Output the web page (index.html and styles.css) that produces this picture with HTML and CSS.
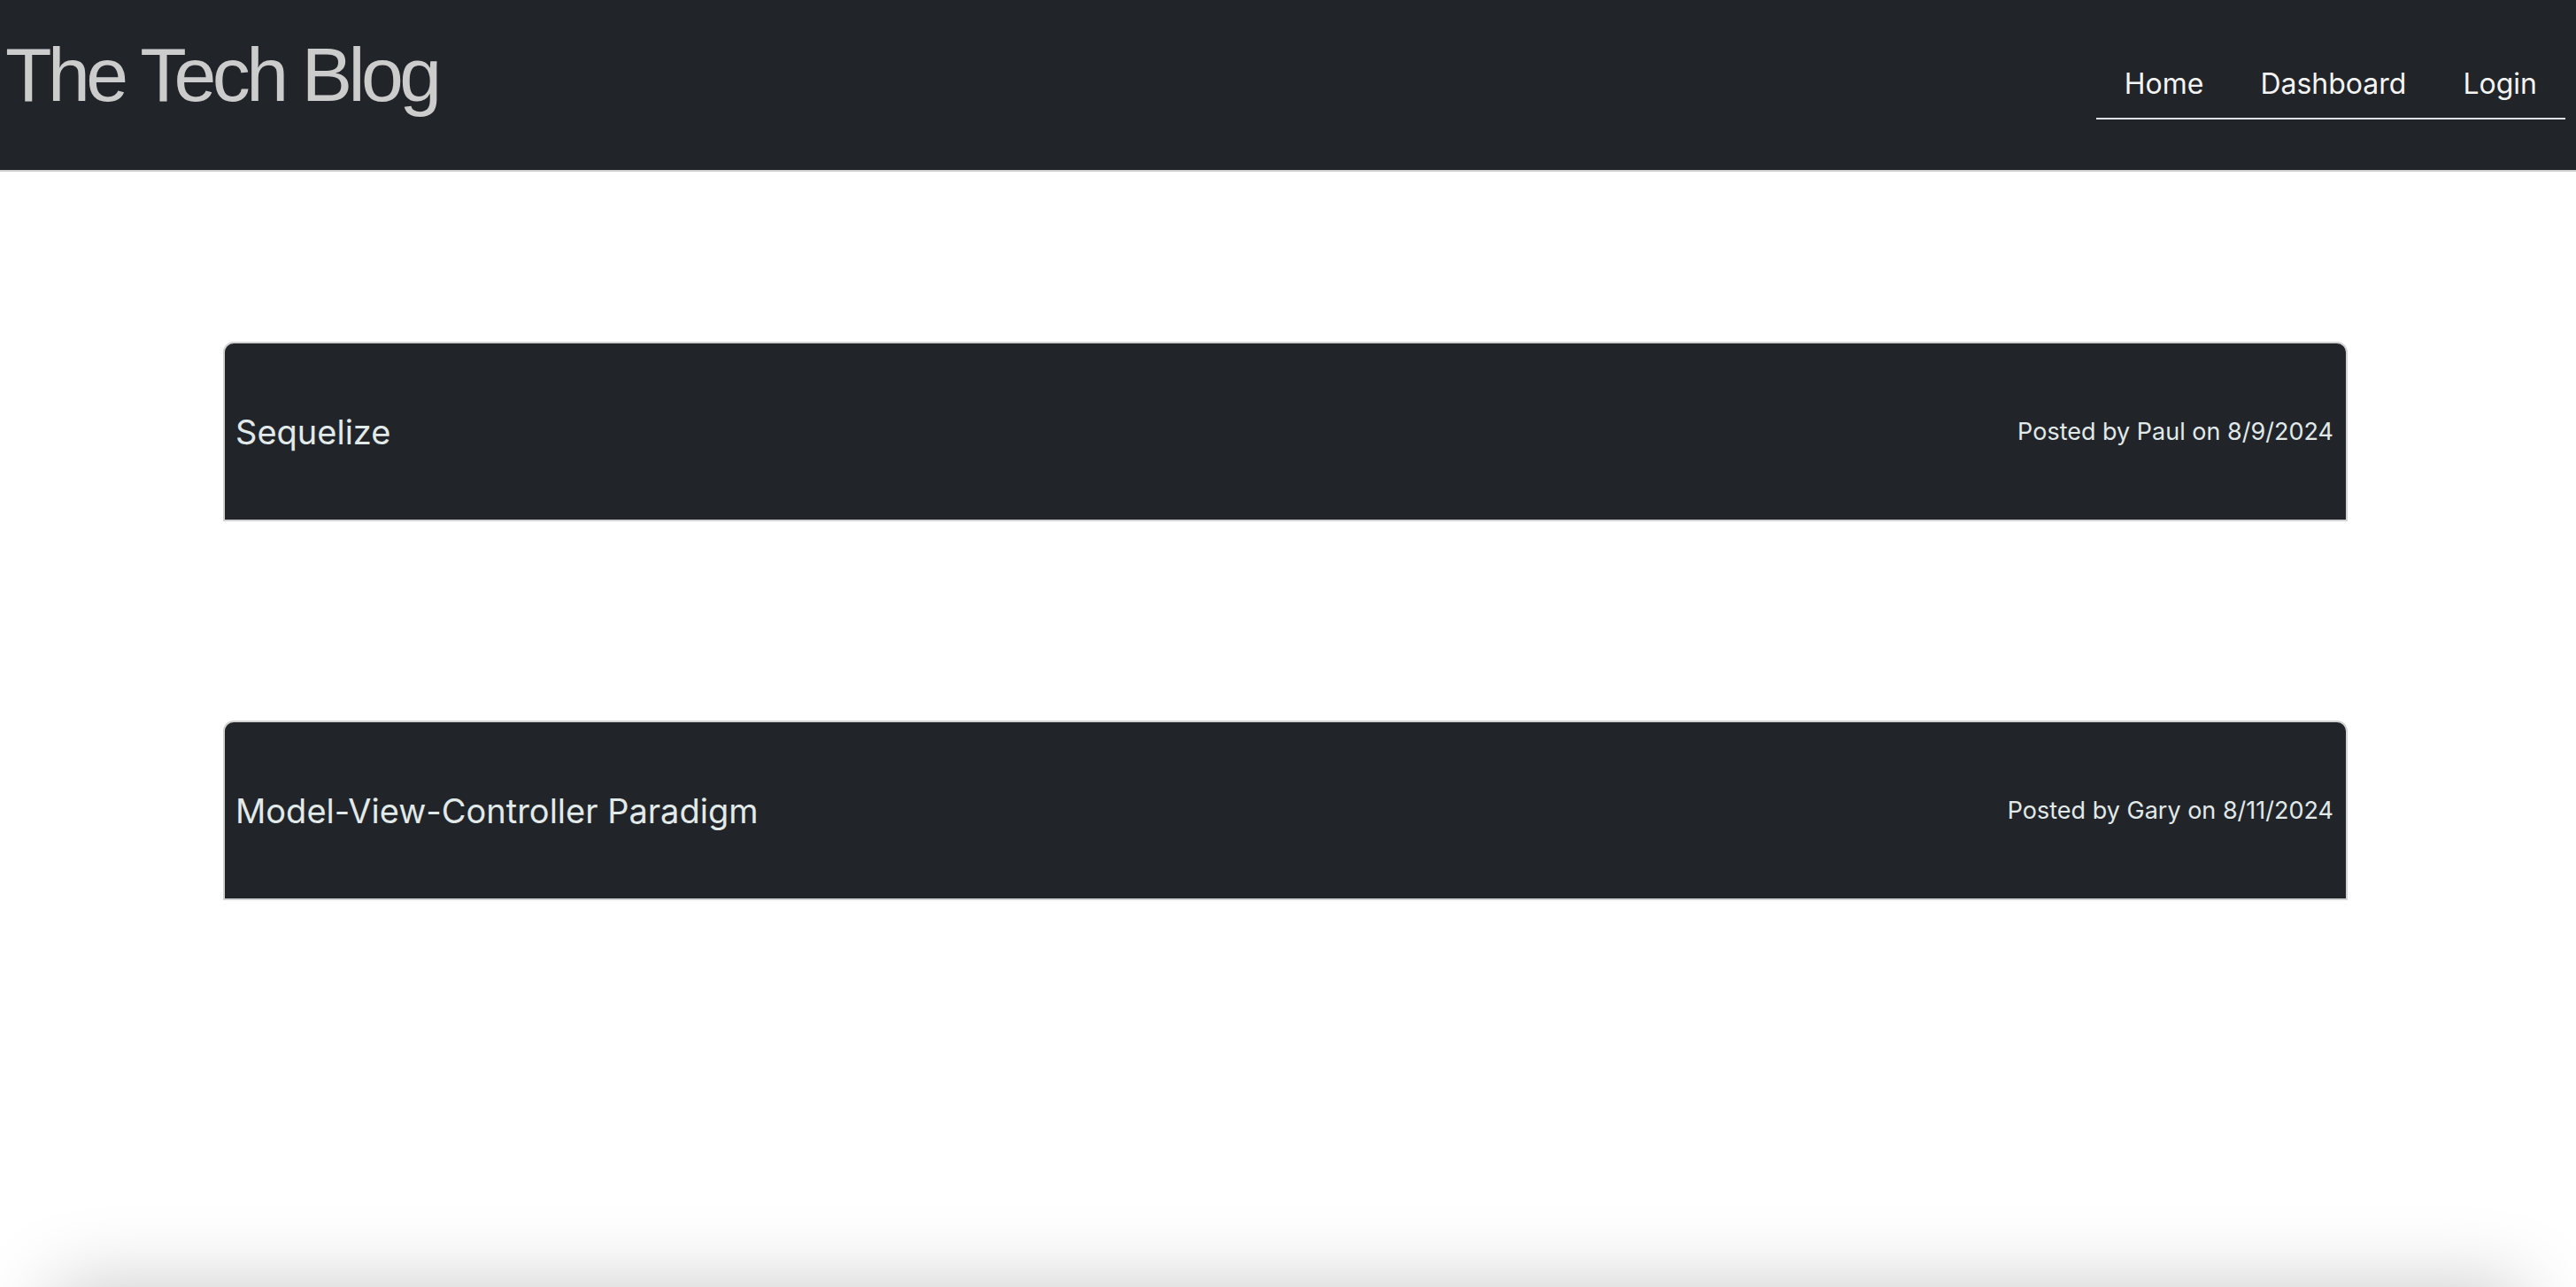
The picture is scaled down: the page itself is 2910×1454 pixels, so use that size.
FILE: index.html
```html
<!DOCTYPE html>
<html lang="en">
<head>
<meta charset="utf-8">
<title>The Tech Blog</title>
<link rel="stylesheet" href="styles.css">
</head>
<body>
<div class="page">
  <header class="site-header">
    <h1 class="brand">The Tech Blog</h1>
    <nav class="nav">
      <a class="nav-link" href="#">Home</a>
      <a class="nav-link" href="#">Dashboard</a>
      <a class="nav-link" href="#">Login</a>
    </nav>
  </header>
  <main class="posts">
    <article class="post-card">
      <h2 class="post-title">Sequelize</h2>
      <p class="post-meta">Posted by Paul on 8/9/2024</p>
    </article>
    <article class="post-card">
      <h2 class="post-title">Model-View-Controller Paradigm</h2>
      <p class="post-meta">Posted by Gary on 8/11/2024</p>
    </article>
  </main>
</div>
<footer class="site-footer"></footer>
</body>
</html>
```
FILE: styles.css
```css
* { box-sizing: border-box; }
html, body { margin: 0; padding: 0; }
body {
  background: #ffffff;
  font-family: Inter, "Noto Sans", "Liberation Sans", sans-serif;
  overflow: hidden;
}
.page {
  min-height: 100vh;
}
.site-header {
  height: 194px;
  background: #212529;
  border-bottom: 2px solid #d0d0d0;
  display: flex;
  justify-content: space-between;
  align-items: flex-start;
}
.brand {
  margin: 0;
  padding: 41px 0 0 6px;
  font-family: "Liberation Sans", Arial, sans-serif;
  font-weight: 400;
  font-size: 86px;
  line-height: 1;
  letter-spacing: -4.6px;
  color: #cccccc;
}
.nav {
  display: flex;
  margin: 55px 12px 0 0;
  border-bottom: 2px solid #dee2e6;
}
.nav-link {
  display: block;
  padding: 16px 32px 14px;
  font-size: 32px;
  line-height: 48px;
  color: #f4f4f4;
  text-decoration: none;
}
.posts {
  padding: 192px 258px 0 252px;
}
.post-card {
  height: 203px;
  margin: 0 0 225px;
  background: #212529;
  border: 2px solid #d2d2d2;
  border-radius: 12px 12px 0 0;
  display: flex;
  justify-content: space-between;
  align-items: center;
  padding: 0 14px 0 12px;
}
.post-title {
  margin: 0;
  font-size: 38px;
  font-weight: 400;
  color: #e2e9e9;
}
.post-meta {
  margin: 0;
  font-size: 27px;
  color: #e2e9e9;
}
.site-footer {
  height: 120px;
  margin: 0 60px;
  box-shadow: 0 0 90px rgba(0, 0, 0, 0.22);
}
```
